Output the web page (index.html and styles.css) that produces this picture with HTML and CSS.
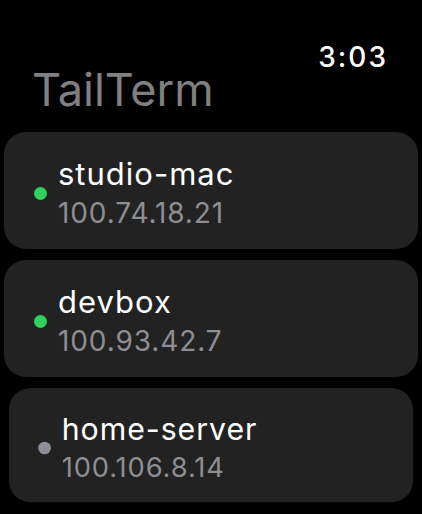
FILE: index.html
```html
<!DOCTYPE html>
<html lang="en">
<head>
  <meta charset="UTF-8" />
  <meta name="viewport" content="width=device-width, initial-scale=1.0"/>
  <title>TailTerm</title>
  <link rel="stylesheet" href="styles.css">
</head>
<body>

<header class="top">
  <div class="clock">3:03</div>
  <h1 class="title">TailTerm</h1>
</header>

<main class="hosts">
  <div class="host">
    <span class="dot online"></span>
    <div class="info">
      <div class="name">studio-mac</div>
      <div class="ip">100.74.18.21</div>
    </div>
  </div>
  <div class="host">
    <span class="dot online"></span>
    <div class="info">
      <div class="name">devbox</div>
      <div class="ip">100.93.42.7</div>
    </div>
  </div>
  <!-- last row shrinks a bit at the screen edge -->
  <div class="host edge">
    <span class="dot"></span>
    <div class="info">
      <div class="name">home-server</div>
      <div class="ip">100.106.8.14</div>
    </div>
  </div>
</main>

</body>
</html>
```

FILE: styles.css
```css
body {
  margin: 0;
  background: black;
  color: white;
  font-family: Inter, "Noto Sans", sans-serif;
  overflow: hidden;
}

.top {
  display: flex;
  flex-direction: column;
  padding-top: 45px;
}

.clock {
  align-self: flex-end;
  padding-right: 34px;
  font-size: 28px;
  font-weight: 500;
  line-height: 24px;
  letter-spacing: 2px;
}

.title {
  margin: 1px 0 0;
  padding-left: 32px;
  font-size: 45px;
  font-weight: 400;
  line-height: 40px;
  color: #808080;
}

.hosts {
  display: flex;
  flex-direction: column;
  gap: 11px;
  margin-top: 22px;
}

.host {
  display: flex;
  align-items: center;
  gap: 11px;
  margin: 0 4px;
  height: 117px;
  padding: 5px 0 0 30px;
  box-sizing: border-box;
  background: #222222;
  border-radius: 22px;
}

.host.edge {
  transform: scale(0.976);
  transform-origin: center top;
}

.dot {
  width: 13px;
  height: 13px;
  border-radius: 50%;
  background: #8e8e96;
  flex-shrink: 0;
}

.dot.online {
  background: #30d158;
}

.name {
  font-size: 31px;
  line-height: 40px;
  letter-spacing: 1px;
}

.ip {
  font-size: 28px;
  line-height: 38px;
  letter-spacing: 0.9px;
  color: #8e8e93;
}
```
